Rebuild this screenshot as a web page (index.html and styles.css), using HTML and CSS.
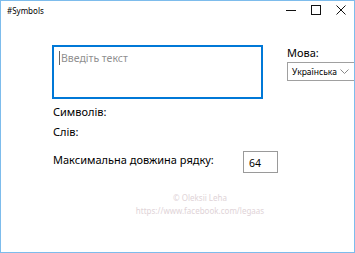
FILE: index.html
```html
<!DOCTYPE html>
<html lang="uk">
<head>
  <meta charset="UTF-8">
  <title>#Symbols</title>
  <link rel="stylesheet" href="styles.css">
</head>
<body>
  <div class="window">
    <div class="titlebar">
      <span class="title">#Symbols</span>
      <div class="controls">
        <span class="ctl">
          <svg width="10" height="10" viewBox="0 0 10 10"><path d="M0 5.5h10" stroke="#111" stroke-width="1"/></svg>
        </span>
        <span class="ctl">
          <svg width="10" height="10" viewBox="0 0 10 10"><rect x="0.5" y="0.5" width="9" height="9" fill="none" stroke="#111" stroke-width="1"/></svg>
        </span>
        <span class="ctl">
          <svg width="10" height="10" viewBox="0 0 10 10"><path d="M0.5 0.5l9 9M9.5 0.5l-9 9" stroke="#111" stroke-width="1"/></svg>
        </span>
      </div>
    </div>

    <div class="content">
      <div class="top-row">
        <div class="textbox"><span class="caret"></span><span class="placeholder">Введіть текст</span></div>
        <div class="lang">
          <div class="label">Мова:</div>
          <div class="combo">
            <span>Українська</span>
            <svg width="9" height="6" viewBox="0 0 9 6"><path d="M0.5 0.5l4 4 4-4" fill="none" stroke="#888" stroke-width="1"/></svg>
          </div>
        </div>
      </div>

      <div class="label stat">Символів:</div>
      <div class="label stat">Слів:</div>
      <div class="max-row">
        <span class="label max-label">Максимальна довжина рядку:</span>
        <span class="num-box">64</span>
      </div>

      <div class="footer">
        <div>© Oleksii Leha</div>
        <div>https://www.facebook.com/legaas</div>
      </div>
    </div>
  </div>
</body>
</html>
```

FILE: styles.css
```css
html, body {
  margin: 0;
  padding: 0;
  background: #fff;
}
body {
  font-family: "Noto Sans", "Open Sans", sans-serif;
  color: #000;
}
.window {
  width: 355px;
  height: 253px;
  box-sizing: border-box;
  border: 1px solid #7dbcec;
  background: #fff;
  overflow: hidden;
}
.titlebar {
  height: 30px;
  display: flex;
  align-items: flex-start;
  justify-content: space-between;
}
.title {
  font-size: 8px;
  margin: 4px 0 0 6px;
  color: #000;
}
.controls {
  display: flex;
  margin-right: 1px;
}
.ctl {
  width: 25px;
  height: 18px;
  display: flex;
  align-items: center;
  justify-content: center;
}
.content {
  padding: 14px 0 0 51px;
}
.top-row {
  display: flex;
  align-items: flex-start;
}
.textbox {
  width: 211px;
  height: 54px;
  box-sizing: border-box;
  border: 2px solid #0078d7;
  display: flex;
  align-items: flex-start;
  padding: 4px 0 0 5px;
}
.caret {
  width: 1px;
  height: 14px;
  background: #666;
}
.placeholder {
  font-size: 10.5px;
  color: #8f8f8f;
  line-height: 14px;
  margin-left: 1px;
}
.lang {
  margin-left: 24px;
}
.label {
  font-size: 11px;
  line-height: 15px;
}
.combo {
  margin-top: 2px;
  width: 67px;
  height: 19px;
  box-sizing: border-box;
  border: 1px solid #a0a0a0;
  border-right: none;
  display: flex;
  align-items: center;
  justify-content: space-between;
  padding: 0 5px 0 4px;
  font-size: 8.5px;
}
.stat {
  padding-left: 1px;
  line-height: 20px;
}
.top-row + .stat {
  margin-top: 3px;
}
.max-row {
  display: flex;
  align-items: flex-start;
  padding-left: 1px;
  margin-top: 9px;
}
.max-label {
  width: 190px;
  line-height: 16px;
  margin-top: 1px;
}
.num-box {
  width: 35px;
  height: 22px;
  box-sizing: border-box;
  border: 1.5px solid #9a9a9a;
  font-size: 10.5px;
  display: flex;
  align-items: center;
  padding-left: 5px;
  padding-top: 1px;
}
.footer {
  margin-top: 18px;
  width: 296px;
  text-align: center;
  font-size: 8px;
  line-height: 13px;
  color: #e0d3d7;
}
```
